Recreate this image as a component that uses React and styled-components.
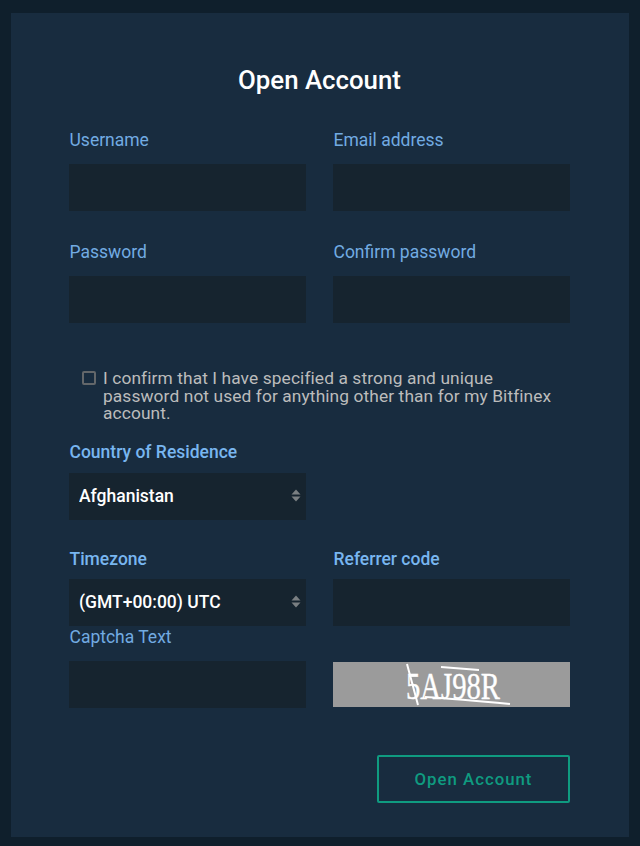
import React from "react";
import styled, { createGlobalStyle } from "styled-components";

const GlobalStyle = createGlobalStyle`
  html, body {
    margin: 0;
    padding: 0;
    background: #0f1f2c;
    font-family: Roboto, "Liberation Sans", sans-serif;
  }
`;

const Page = styled.div`
  width: 640px;
  height: 846px;
  box-sizing: border-box;
  padding: 13px 11px 9px;
`;

const Card = styled.form`
  height: 824px;
  box-sizing: border-box;
  background: #182c3f;
  padding: 51px 59px 34px 58px;
`;

const Title = styled.h2`
  margin: 0 0 32px;
  height: 32px;
  font-size: 25.8px;
  line-height: 32px;
  font-weight: 500;
  color: #fff;
  text-align: center;
`;

const Row = styled.div`
  display: grid;
  grid-template-columns: 237px 237px;
  column-gap: 27px;
  margin-bottom: ${(p) => p.$gap || 0}px;
`;

const Label = styled.label`
  display: block;
  height: ${(p) => p.$height || 24}px;
  line-height: ${(p) => p.$height || 24}px;
  margin-top: ${(p) => p.$top || 0}px;
  margin-bottom: ${(p) => p.$gap || 12}px;
  padding-left: 0.5px;
  font-size: 17.5px;
  font-weight: ${(p) => (p.$strong ? 500 : 400)};
  color: ${(p) => (p.$strong ? "#78b6f0" : "#72abe2")};
`;

const Input = styled.input`
  display: block;
  width: 100%;
  height: 47px;
  box-sizing: border-box;
  border: 0;
  outline: 0;
  background: #16242f;
  color: #fff;
`;

const ConfirmRow = styled.div`
  display: flex;
  align-items: flex-start;
  gap: 7px;
  padding-left: 13px;
  margin: 47px 0 17px;
`;

const Check = styled.input.attrs({ type: "checkbox" })`
  appearance: none;
  flex: none;
  width: 14px;
  height: 14px;
  margin: 1px 0 0;
  box-sizing: border-box;
  border: 2px solid #63676a;
  border-radius: 2px;
  background: transparent;
`;

const ConfirmText = styled.span`
  width: 455px;
  font-size: 17.35px;
  line-height: 17.5px;
  color: #bcbcbc;
  letter-spacing: 0.1px;
`;

const SelectWrap = styled.div`
  position: relative;
  height: 47px;
`;

const Select = styled.select`
  display: block;
  width: 100%;
  height: 47px;
  box-sizing: border-box;
  appearance: none;
  border: 0;
  outline: 0;
  padding: 0 0 0 10px;
  background: #16242f;
  color: #fff;
  font-family: Roboto, "Liberation Sans", sans-serif;
  font-size: 17.5px;
  font-weight: 500;
`;

const Arrows = styled.svg`
  position: absolute;
  right: 5px;
  top: 16px;
  width: 10px;
  height: 13px;
  fill: #7a7f82;
  pointer-events: none;
`;

const Captcha = styled.svg`
  display: block;
  width: 237px;
  height: 45px;
  margin-top: 1px;
  background: #9b9b9b;
`;

const CaptchaText = styled.text`
  font-family: "Liberation Serif", serif;
  font-size: 37px;
  fill: #fff;
  stroke: #fff;
  stroke-width: 0.4px;
`;

const Actions = styled.div`
  display: flex;
  justify-content: flex-end;
  margin-top: 47px;
`;

const SubmitButton = styled.button`
  width: 193px;
  height: 48px;
  box-sizing: border-box;
  border: 2px solid #0f9b80;
  border-radius: 2px;
  background: transparent;
  color: #0f9b80;
  font-family: Roboto, "Liberation Sans", sans-serif;
  font-size: 16.8px;
  font-weight: 500;
  letter-spacing: 1px;
`;

const SelectField = ({ children }) => (
  <SelectWrap>
    <Select>{children}</Select>
    <Arrows viewBox="0 0 10 13">
      <path d="M5 0.5 9.5 5.5H0.5Z" />
      <path d="M5 12.5 9.5 7.5H0.5Z" />
    </Arrows>
  </SelectWrap>
);

const App = () => {
  return (
    <Page>
      <GlobalStyle />
      <Card onSubmit={(e) => e.preventDefault()}>
        <Title>Open Account</Title>

        <Row $gap={29}>
          <div>
            <Label>Username</Label>
            <Input type="text" />
          </div>
          <div>
            <Label>Email address</Label>
            <Input type="text" />
          </div>
        </Row>

        <Row>
          <div>
            <Label>Password</Label>
            <Input type="password" />
          </div>
          <div>
            <Label>Confirm password</Label>
            <Input type="password" />
          </div>
        </Row>

        <ConfirmRow>
          <Check />
          <ConfirmText>
            I confirm that I have specified a strong and unique password not
            used for anything other than for my Bitfinex account.
          </ConfirmText>
        </ConfirmRow>

        <Row $gap={27}>
          <div>
            <Label $strong $gap={9}>Country of Residence</Label>
            <SelectField>
              <option>Afghanistan</option>
            </SelectField>
          </div>
        </Row>

        <Row>
          <div>
            <Label $strong $gap={8}>Timezone</Label>
            <SelectField>
              <option>(GMT+00:00) UTC</option>
            </SelectField>
          </div>
          <div>
            <Label $strong $gap={8}>Referrer code</Label>
            <Input type="text" />
          </div>
        </Row>

        <Label $height={20} $gap={14} $top={1}>Captcha Text</Label>
        <Row>
          <Input type="text" />
          <Captcha viewBox="0 0 237 45">
            <CaptchaText x="73" y="37" textLength="94" lengthAdjust="spacingAndGlyphs">
              5AJ98R
            </CaptchaText>
            <path
              d="M74 2 L85 43 M108 5 L146 8 M92 35 Q125 37 177 42"
              fill="none"
              stroke="#fff"
              strokeWidth="2"
            />
          </Captcha>
        </Row>

        <Actions>
          <SubmitButton type="submit">Open Account</SubmitButton>
        </Actions>
      </Card>
    </Page>
  );
};

export default App;
